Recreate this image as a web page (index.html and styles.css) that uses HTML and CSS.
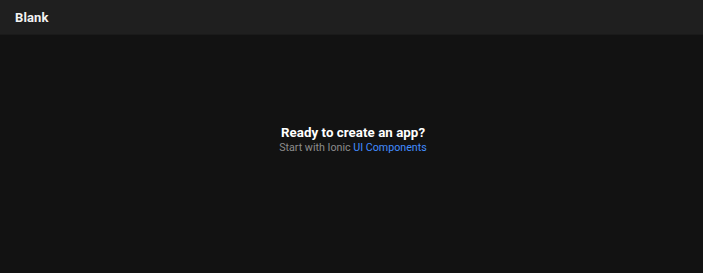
FILE: index.html
```html
<!DOCTYPE html>
<html>
<head>
<meta charset="utf-8">
<link rel="stylesheet" href="styles.css">
</head>
<body>
<div class="app">
  <header class="toolbar"><span class="title">Blank</span></header>
  <main class="content">
    <div class="container">
      <strong class="headline">Ready to create an app?</strong>
      <p class="sub">Start with Ionic <a class="link" href="#">UI Components</a></p>
    </div>
  </main>
</div>
</body>
</html>
```
FILE: styles.css
```css
html, body { margin: 0; padding: 0; height: 100%; }
body { background: #121212; font-family: Roboto, "Liberation Sans", sans-serif; color: #fff; }
.app { display: flex; flex-direction: column; height: 100%; }
.toolbar { height: 35px; flex: none; background: #1f1f1f; border-bottom: 1px solid #1a1a1a; box-sizing: border-box; display: flex; align-items: center; padding-left: 15px; padding-top: 1px; }
.title { font-weight: 700; font-size: 13px; letter-spacing: 0.1px; color: #f2f2f2; }
.content { flex: 1; display: flex; align-items: center; justify-content: center; padding-bottom: 29px; padding-left: 3px; }
.container { text-align: center; }
.headline { display: block; font-size: 13.3px; line-height: 16px; font-weight: 700; letter-spacing: 0.05px; }
.sub { margin: 0; font-size: 10.7px; line-height: 14px; color: #8c8c8c; }
.link { color: #428cff; text-decoration: none; }
```
